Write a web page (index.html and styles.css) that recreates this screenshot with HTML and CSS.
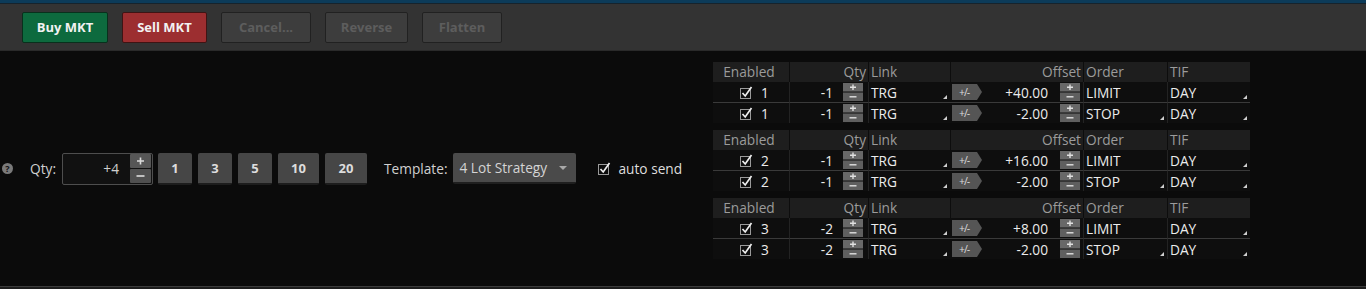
FILE: index.html
```html
<!DOCTYPE html>
<html lang="en">
<head>
    <meta charset="UTF-8">
    <meta name="viewport" content="width=device-width, initial-scale=1.0">
    <title>Order Entry</title>
    <link rel="stylesheet" href="styles.css">
</head>
<body>
    <div class="topline"></div>

    <div class="toolbar">
        <button class="btn buy">Buy MKT</button>
        <button class="btn sell">Sell MKT</button>
        <button class="btn off w-cancel">Cancel...</button>
        <button class="btn off w-reverse">Reverse</button>
        <button class="btn off w-flatten">Flatten</button>
    </div>

    <div class="main">
        <div class="controls">
            <span class="help">?</span>
            <span class="label qty-label">Qty:</span>
            <div class="qty-box">
                <span class="qty-value">+4</span>
                <svg class="spin-big" width="21" height="29" viewBox="0 0 21 29">
                    <rect x="0" y="0" width="21" height="14" rx="1" fill="#565656"/>
                    <rect x="0" y="15" width="21" height="14" rx="1" fill="#505050"/>
                    <path d="M7 7 H14 M10.5 3.5 V10.5" stroke="#dcdcdc" stroke-width="1.6"/>
                    <path d="M6.5 22 H14.5" stroke="#dcdcdc" stroke-width="1.6"/>
                </svg>
            </div>
            <div class="quick">
                <button class="qbtn">1</button>
                <button class="qbtn">3</button>
                <button class="qbtn">5</button>
                <button class="qbtn wide">10</button>
                <button class="qbtn wide2">20</button>
            </div>
            <span class="label tpl-label">Template:</span>
            <div class="select">
                <span>4 Lot Strategy</span>
                <span class="caret"></span>
            </div>
            <label class="auto">
                <svg class="check" width="13" height="13" viewBox="0 0 13 13">
                    <rect x="0.5" y="2.5" width="10" height="10" fill="none" stroke="#9a9a9a"/>
                    <path d="M2.5 7 L5.2 10 L11.5 1" fill="none" stroke="#eeeeee" stroke-width="1.7"/>
                </svg>
                <span>auto send</span>
            </label>
        </div>

        <div class="brackets" id="brackets"></div>
    </div>

    <div class="bottomline"></div>

    <script>
        // bracket order groups
        const groups = [
            { n: 1, qty: '-1', rows: [['+40.00', 'LIMIT'], ['-2.00', 'STOP']] },
            { n: 2, qty: '-1', rows: [['+16.00', 'LIMIT'], ['-2.00', 'STOP']] },
            { n: 3, qty: '-2', rows: [['+8.00', 'LIMIT'], ['-2.00', 'STOP']] }
        ];

        const checkSvg = `
            <svg class="check" width="13" height="13" viewBox="0 0 13 13">
                <rect x="0.5" y="2.5" width="10" height="10" fill="none" stroke="#9a9a9a"/>
                <path d="M2.5 7 L5.2 10 L11.5 1" fill="none" stroke="#eeeeee" stroke-width="1.7"/>
            </svg>`;

        const spin = `
            <svg class="spin" width="20" height="18" viewBox="0 0 20 18">
                <rect x="0" y="0" width="20" height="8.5" fill="#686868"/>
                <rect x="0" y="9.5" width="20" height="8.5" fill="#5f5f5f"/>
                <path d="M7 4.3 H13 M10 1.5 V7" stroke="#e0e0e0" stroke-width="1.4"/>
                <path d="M6.5 13.8 H13.5" stroke="#e0e0e0" stroke-width="1.4"/>
            </svg>`;

        function renderGroups() {
            const box = document.getElementById('brackets');
            groups.forEach(g => {
                const el = document.createElement('div');
                el.className = 'group';
                let html = `
                    <div class="hd c-en">Enabled</div>
                    <div class="hd c-qty">Qty</div>
                    <div class="hd c-link">Link</div>
                    <div class="hd c-off">Offset</div>
                    <div class="hd c-ord">Order</div>
                    <div class="hd c-tif">TIF</div>`;
                g.rows.forEach((r, i) => {
                    const cls = i === 0 ? 'cell first' : 'cell';
                    const ordTri = r[1] === 'STOP' ? '<span class="tri"></span>' : '';
                    html += `
                        <div class="${cls} c-en">${checkSvg}<span class="num">${g.n}</span></div>
                        <div class="${cls} c-qty"><span class="val">${g.qty}</span>${spin}</div>
                        <div class="${cls} c-link"><span>TRG</span><span class="tri"></span></div>
                        <div class="${cls} c-off"><span class="pm">+/-</span><span class="val">${r[0]}</span>${spin}</div>
                        <div class="${cls} c-ord"><span>${r[1]}</span>${ordTri}</div>
                        <div class="${cls} c-tif"><span>DAY</span><span class="tri"></span></div>`;
                });
                el.innerHTML = html;
                box.appendChild(el);
            });
        }

        renderGroups();
    </script>
</body>
</html>
```

FILE: styles.css
```css
/* Basic Styling */
body {
    font-family: "Open Sans", "DejaVu Sans", sans-serif;
    font-size: 13.7px;
    margin: 0;
    padding: 0;
    width: 1366px;
    height: 289px;
    overflow: hidden;
    background-color: #0b0b0b;
    color: #e8e8e8;
}

button {
    font-family: inherit;
    cursor: pointer;
}

.topline {
    height: 3px;
    background-color: #0c3b59;
    border-bottom: 1px solid #16232c;
}

/* toolbar */
.toolbar {
    height: 47px;
    background-color: #333333;
    border-bottom: 1px solid #2a2a2a;
    box-sizing: border-box;
    display: flex;
    align-items: center;
    gap: 14px;
    padding-left: 22px;
}

.btn {
    height: 31px;
    width: 86px;
    padding: 0;
    border-radius: 2px;
    border: 1px solid #1c1c1c;
    font-size: 13px;
    font-weight: 700;
    color: #f2f2f2;
}

.buy {
    background-color: #0d6a3e;
    border-color: #08301c;
}

.sell {
    width: 85px;
    background-color: #9c2e30;
    border-color: #3e1414;
}

.off {
    background-color: #3d3d3d;
    border-color: #212121;
    color: #5d5d5d;
}

.w-cancel { width: 90px; }
.w-reverse { width: 83px; }
.w-flatten { width: 80px; }

/* main area */
.main {
    height: 235px;
    display: flex;
}

.controls {
    display: flex;
    align-items: center;
    align-self: center;
    padding-left: 2px;
    width: 711px;
}

.help {
    width: 11px;
    height: 11px;
    border-radius: 50%;
    background-color: #7a7a7a;
    color: #111;
    font-size: 9px;
    font-weight: 700;
    line-height: 11px;
    text-align: center;
}

.label {
    color: #d0d0d0;
}

.qty-label {
    margin-left: 17px;
}

.qty-box {
    margin-left: 6px;
    width: 91px;
    height: 32px;
    box-sizing: border-box;
    border: 1px solid #4e4e4e;
    border-radius: 2px;
    background-color: #111111;
    display: flex;
    align-items: center;
    padding-right: 1px;
}

.qty-value {
    flex: 1;
    text-align: right;
    padding-right: 11px;
    color: #cfcfcf;
}

.quick {
    display: flex;
    gap: 6px;
    margin-left: 5px;
}

.qbtn {
    width: 34px;
    height: 32px;
    padding: 0;
    border: none;
    border-bottom: 2px solid #1d1d1d;
    border-radius: 2px;
    background-color: #464646;
    color: #dddddd;
    font-size: 13px;
    font-weight: 700;
}

.qbtn.wide { width: 41px; }
.qbtn.wide2 { width: 42px; }

.tpl-label {
    margin-left: 17px;
}

.select {
    margin-left: 6px;
    width: 123px;
    height: 31px;
    box-sizing: border-box;
    background-color: #4a4a4a;
    border-bottom: 2px solid #1f1f1f;
    border-radius: 2px;
    display: flex;
    align-items: center;
    justify-content: space-between;
    padding: 0 9px 0 6px;
    color: #d4d4d4;
}

.caret {
    width: 0;
    height: 0;
    border-left: 4px solid transparent;
    border-right: 4px solid transparent;
    border-top: 4px solid #a8a8a8;
}

.auto {
    margin-left: 22px;
    display: flex;
    align-items: center;
    gap: 7px;
    color: #dedede;
}

/* bracket table */
.brackets {
    padding-top: 11px;
    display: flex;
    flex-direction: column;
    gap: 7px;
}

.group {
    display: grid;
    grid-template-columns: 76px 79px 82px 133px 84px 83px;
}

.hd {
    height: 20px;
    line-height: 20px;
    background-color: #1e1e1e;
    color: #9b9b9b;
    box-sizing: border-box;
    border-left: 1px solid #0d0d0d;
}

.hd.c-en {
    border-left: none;
    text-align: center;
    padding-right: 4px;
}

.hd.c-qty,
.hd.c-off {
    text-align: right;
    padding-right: 2px;
}

.hd.c-link,
.hd.c-ord,
.hd.c-tif {
    padding-left: 2px;
}

.cell {
    height: 20px;
    box-sizing: border-box;
    display: flex;
    align-items: center;
    background-color: #0e0e0e;
    border-left: 1px solid #232323;
    color: #ececec;
}

.cell.first {
    height: 21px;
    border-bottom: 1px solid #3a3a3a;
}

.cell.c-en {
    border-left: none;
    padding-left: 27px;
    gap: 8px;
}

.cell.c-qty {
    padding-right: 5px;
}

.cell .val {
    flex: 1;
    text-align: right;
}

.cell.c-qty .val {
    margin-right: 10px;
}

.cell.c-link,
.cell.c-ord,
.cell.c-tif {
    justify-content: space-between;
    padding-left: 2px;
    padding-right: 3px;
}

.cell.c-off {
    border-left: none;
    padding-left: 2px;
    padding-right: 3px;
}

.cell.c-off .val {
    margin-right: 12px;
}

.pm {
    width: 30px;
    height: 16px;
    background-color: #555555;
    clip-path: polygon(0 0, 25px 0, 30px 8px, 25px 16px, 0 16px);
    color: #dddddd;
    font-size: 10.5px;
    line-height: 16px;
    padding-left: 7px;
    box-sizing: border-box;
    letter-spacing: -1px;
}

.tri {
    align-self: flex-end;
    margin-bottom: 3px;
    width: 0;
    height: 0;
    border-left: 4px solid transparent;
    border-bottom: 4px solid #cfcfcf;
}

.bottomline {
    height: 3px;
    border-top: 1px solid #3c3c3c;
    background-color: #1d1d1d;
    box-sizing: border-box;
}
```
